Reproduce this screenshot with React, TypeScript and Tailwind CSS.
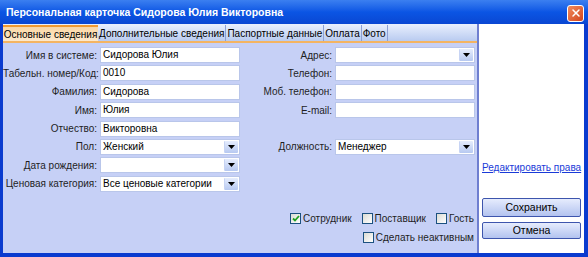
import { X } from 'lucide-react'

const font = { fontFamily: '"Liberation Sans", Arial, sans-serif' }

const tabs = ['Основные сведения', 'Дополнительные сведения', 'Паспортные данные', 'Оплата', 'Фото']

function Arrow() {
  return (
    <div className="flex h-full w-[14px] items-center justify-center rounded-[1px] border-l border-[#c7d4f4] bg-gradient-to-b from-[#e6edfd] to-[#b7c9f1]">
      <svg width="7" height="4" viewBox="0 0 7 4">
        <path d="M0 0h7L3.5 4z" fill="#000" />
      </svg>
    </div>
  )
}

function Field({ value = '', select = false }: { value?: string; select?: boolean }) {
  return (
    <div className="flex h-[16px] items-stretch border border-[#b9c6ea] bg-white p-px">
      <span className="flex-1 truncate whitespace-nowrap pl-[1px] text-[10px] leading-[12px] text-black">{value}</span>
      {select && <Arrow />}
    </div>
  )
}

function Label({ text }: { text: string }) {
  return <span className="self-center whitespace-nowrap text-right text-[10px] leading-[13px] text-[#1e1e1e]">{text}</span>
}

function Check({ label, checked = false }: { label: string; checked?: boolean }) {
  return (
    <div className="flex items-center gap-[2px]">
      <div className="flex h-[11px] w-[11px] items-center justify-center border border-[#1c5180] bg-gradient-to-br from-[#dcdcd4] to-white">
        {checked && (
          <svg width="8" height="7" viewBox="0 0 8 7">
            <path d="M1 3.5l2 2L7 1" stroke="#21a121" strokeWidth="1.8" fill="none" />
          </svg>
        )}
      </div>
      <span className="whitespace-nowrap text-[10px] leading-[13px] text-[#1e1e1e]">{label}</span>
    </div>
  )
}

export default function App() {
  return (
    <div className="flex h-[257px] w-[588px] flex-col overflow-hidden bg-[#0a3bcf]" style={font}>
      {/* Title bar */}
      <div className="flex h-[24px] shrink-0 items-center justify-between bg-gradient-to-b from-[#3b7ff0] via-[#0b55e4] to-[#0a47d2] pl-[6px] pr-[4px] pt-[2px]">
        <span className="whitespace-nowrap text-[10.5px] font-bold text-white">
          Персональная карточка Сидорова Юлия Викторовна
        </span>
        <div className="flex h-[17px] w-[17px] items-center justify-center rounded-[3px] border border-white bg-gradient-to-br from-[#f08a5c] to-[#d2431a]">
          <X className="h-[12px] w-[12px] text-white" strokeWidth={3} />
        </div>
      </div>

      <div className="flex h-[229px] pl-[3px] pr-[4px]">
        {/* Main column */}
        <div className="flex w-[476px] flex-col border-r-2 border-[#6f7fd0] bg-[#c6d0f6]">
          {/* Tabs */}
          <div className="flex h-[17px] shrink-0 items-end bg-gradient-to-b from-[#eaf0fd] to-[#b9cbf0] pt-[1px]">
            {tabs.map((t, i) =>
              i === 0 ? (
                <div
                  key={t}
                  className="flex h-full w-[95px] items-center justify-center whitespace-nowrap border-t-2 border-[#f19a32] bg-gradient-to-b from-[#fbd7a4] to-[#fde9cc] text-[10px] text-black"
                >
                  {t}
                </div>
              ) : (
                <div key={t} className="flex h-full items-center whitespace-nowrap border-r border-[#8da0d4] px-[1px] text-[10px] text-black">
                  {t}
                </div>
              )
            )}
          </div>
          <div className="h-[2px] shrink-0 bg-[#f4b462]" />

          {/* Form */}
          <div className="flex flex-1 flex-col">
            <div className="mt-[4px] grid grid-cols-[94px_140px_89px_140px] grid-rows-[repeat(8,16px)] gap-x-[3px] gap-y-[2.4px]">
              <Label text="Имя в системе:" />
              <Field value="Сидорова Юлия" />
              <Label text="Адрес:" />
              <Field select />

              <Label text="Табельн. номер/Код:" />
              <Field value="0010" />
              <Label text="Телефон:" />
              <Field />

              <Label text="Фамилия:" />
              <Field value="Сидорова" />
              <Label text="Моб. телефон:" />
              <Field />

              <Label text="Имя:" />
              <Field value="Юлия" />
              <Label text="E-mail:" />
              <Field />

              <Label text="Отчество:" />
              <Field value="Викторовна" />
              <span />
              <span />

              <Label text="Пол:" />
              <Field value="Женский" select />
              <Label text="Должность:" />
              <Field value="Менеджер" select />

              <Label text="Дата рождения:" />
              <Field select />
              <span />
              <span />

              <Label text="Ценовая категория:" />
              <Field value="Все ценовые категории" select />
              <span />
              <span />
            </div>

            <div className="mt-[20px] flex flex-col items-end gap-[6px] pr-[3px]">
              <div className="flex gap-[10px]">
                <Check label="Сотрудник" checked />
                <Check label="Поставщик" />
                <Check label="Гость" />
              </div>
              <Check label="Сделать неактивным" />
            </div>
          </div>
        </div>

        {/* Right panel */}
        <div className="flex flex-1 flex-col bg-white pl-[3px]">
          <a className="mt-[137px] block h-[13px] whitespace-nowrap text-[10px] leading-[13px] text-[#1a3bd8] underline">
            Редактировать права
          </a>
          <button className="mt-[24px] h-[19px] w-[99px] rounded-[2px] border border-[#3d55ad] bg-gradient-to-b from-[#e6ecfd] to-[#b3c3ef] text-[10.5px] text-black">
            Сохранить
          </button>
          <button className="mt-[5px] h-[17px] w-[99px] rounded-[2px] border border-[#3d55ad] bg-gradient-to-b from-[#e6ecfd] to-[#b3c3ef] text-[10.5px] text-black">
            Отмена
          </button>
        </div>
      </div>
    </div>
  )
}
